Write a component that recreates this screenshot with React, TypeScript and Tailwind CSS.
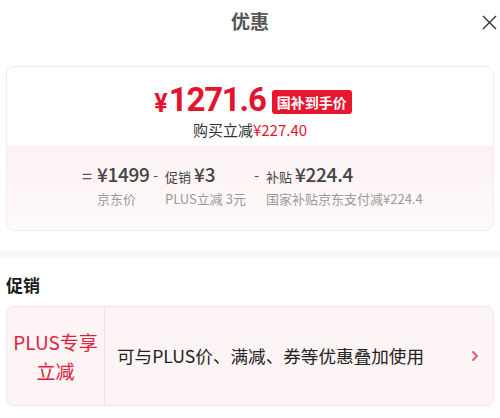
import React from "react";

const font = { fontFamily: '"Noto Sans CJK SC", "Noto Sans", sans-serif' };
const numFont = { fontFamily: 'Roboto, "Noto Sans CJK SC", sans-serif' };

function Breakdown() {
  const groups = [
    { op: "=", opW: "w-[15px] text-[18px]", w: "w-[56px]", value: <span className="text-[19px] font-medium tracking-[-0.3px]">¥1499</span>, label: "京东价" },
    {
      op: "-",
      opW: "w-[12px] text-[15px]",
      w: "w-[89px]",
      value: (
        <span>
          <span className="text-[13px]">促销</span>
          <span className="text-[19px] font-medium ml-[3px]">¥3</span>
        </span>
      ),
      label: "PLUS立减 3元",
    },
    {
      op: "-",
      opW: "w-[12px] text-[15px]",
      w: "",
      value: (
        <span>
          <span className="text-[13px]">补贴</span>
          <span className="text-[19px] font-medium ml-[3px] tracking-[-0.3px]">¥224.4</span>
        </span>
      ),
      label: "国家补贴京东支付减¥224.4",
    },
  ];
  return (
    <div className="flex pl-[75px] pt-[14px]">
      {groups.map((g, i) => (
        <div key={i} className="flex items-start">
          <span className={`${g.opW} h-[28px] flex items-center text-[#555] pt-[2px]`}>{g.op}</span>
          <div className={`${g.w} flex flex-col`}>
            <div className="h-[28px] flex items-center text-[#444] whitespace-nowrap">{g.value}</div>
            <div className="mt-[1px] text-[13px] leading-[20px] text-[#9a9a9a] whitespace-nowrap">{g.label}</div>
          </div>
        </div>
      ))}
    </div>
  );
}

export default function App() {
  return (
    <div className="w-[500px] h-[418px] bg-white overflow-hidden" style={font}>
      <header className="relative h-[42px] flex items-center justify-center">
        <h1 className="text-[19px] font-bold text-[#555]">优惠</h1>
        <svg className="absolute right-[3px] top-[15px]" width="15" height="15" viewBox="0 0 15 15">
          <path d="M1 1 L14 14 M14 1 L1 14" stroke="#333" strokeWidth="1.4" fill="none" />
        </svg>
      </header>

      <section className="mx-[6px] mt-[24px] rounded-[8px] border border-[#f3eaec] overflow-hidden">
        <div className="h-[79px] flex flex-col items-center">
          <div className="flex items-end mt-[14px] h-[38px] pl-[6px]" style={numFont}>
            <span className="text-[#e4142f] font-bold text-[25px] leading-[30px] mr-[1px]">¥</span>
            <span className="text-[#e4142f] font-bold text-[33px] leading-[38px] tracking-[-1.2px]">1271.6</span>
            <span
              className="ml-[6px] mb-[5px] bg-[#e8162f] text-white font-bold text-[14px] leading-[24px] px-[5px] rounded-[3px]"
              style={font}
            >
              国补到手价
            </span>
          </div>
          <div className="text-[15px] leading-[22px]">
            <span className="text-[#333]">购买立减</span>
            <span className="text-[#e4142f]">¥227.40</span>
          </div>
        </div>
        <div className="h-[84px] bg-gradient-to-b from-[#fdf2f3] to-[#fefafa]">
          <Breakdown />
        </div>
      </section>

      <div className="mt-[19px] h-[8px] bg-[#f7f7fa]" />

      <h2 className="mt-[16px] px-[6px] text-[17px] font-bold text-[#1a1a1a] leading-[22px]">促销</h2>

      <div className="mx-[6px] mt-[10px] h-[100px] rounded-[8px] border border-[#f5e4e7] bg-[#fdf4f5] flex items-stretch">
        <div className="w-[98px] border-r border-[#f3e2e5] flex flex-col items-center justify-center text-[#e0213d] text-[19px] leading-[29px]">
          <span>PLUS专享</span>
          <span>立减</span>
        </div>
        <div className="flex-1 flex items-center pl-[12px] text-[17.6px] text-[#222]">
          可与PLUS价、满减、券等优惠叠加使用
        </div>
        <div className="flex items-center mr-[14px]">
          <svg width="8" height="10" viewBox="0 0 8 10">
            <path d="M2 1 L6 5 L2 9" stroke="#e0566f" strokeWidth="1.8" fill="none" strokeLinecap="round" />
          </svg>
        </div>
      </div>
    </div>
  );
}
